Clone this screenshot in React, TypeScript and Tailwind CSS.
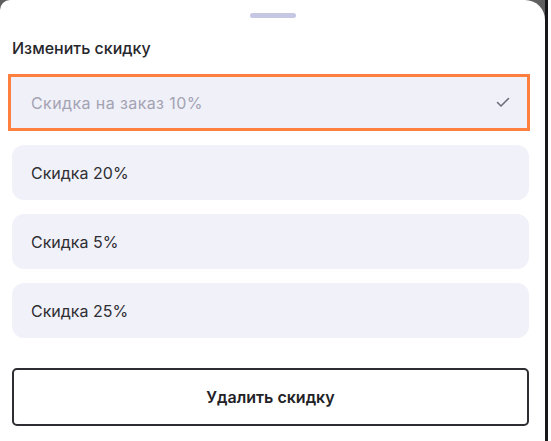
const options = ["Скидка 20%", "Скидка 5%", "Скидка 25%"];

function Check() {
  return (
    <svg width="14" height="11" viewBox="0 0 14 11" fill="none">
      <path d="M1.5 5.5 L5 9 L12.5 1.5" stroke="#6e6e7c" strokeWidth="1.6" strokeLinecap="round" strokeLinejoin="round" />
    </svg>
  );
}

export default function App() {
  return (
    <div className="flex h-[441px] w-[551px] bg-[#5f5f5f] font-['Inter',sans-serif]">
      <div className="flex w-[545px] flex-col rounded-tl-[10px] rounded-tr-[20px] bg-white">
        <div className="flex justify-center pt-[13px]">
          <div className="h-[5px] w-[46px] rounded-full bg-[#c6c7e2]" />
        </div>
        <div className="pl-3 pt-[20px] text-[16px] font-medium leading-5 text-[#26262b]">Изменить скидку</div>
        <div className="ml-2 mt-[16px] w-[522px] border-[3px] border-[#ff7f3f] bg-white">
          <div className="flex h-[51px] items-center justify-between bg-[#f0f0f8] pl-5 pr-[17px] text-[16px] tracking-[0.4px] text-[#a3a3b3]">
            <span>Скидка на заказ 10%</span>
            <Check />
          </div>
        </div>
        <div className="mt-[14px] flex flex-col gap-[14px] pl-3">
          {options.map((o) => (
            <div
              key={o}
              className="flex h-[55px] w-[517px] items-center rounded-[12px] bg-[#f1f1f9] pl-[19px] text-[16px] text-[#2e2e33]"
            >
              {o}
            </div>
          ))}
        </div>
        <div className="ml-3 mt-[30px] flex h-[58px] w-[517px] items-center justify-center rounded-[5px] border-2 border-[#2d2d32] text-[16px] font-semibold text-[#222226]">
          Удалить скидку
        </div>
      </div>
      <div className="w-[3px] bg-[#17171a]" />
      <div className="w-[3px] bg-white" />
    </div>
  );
}
